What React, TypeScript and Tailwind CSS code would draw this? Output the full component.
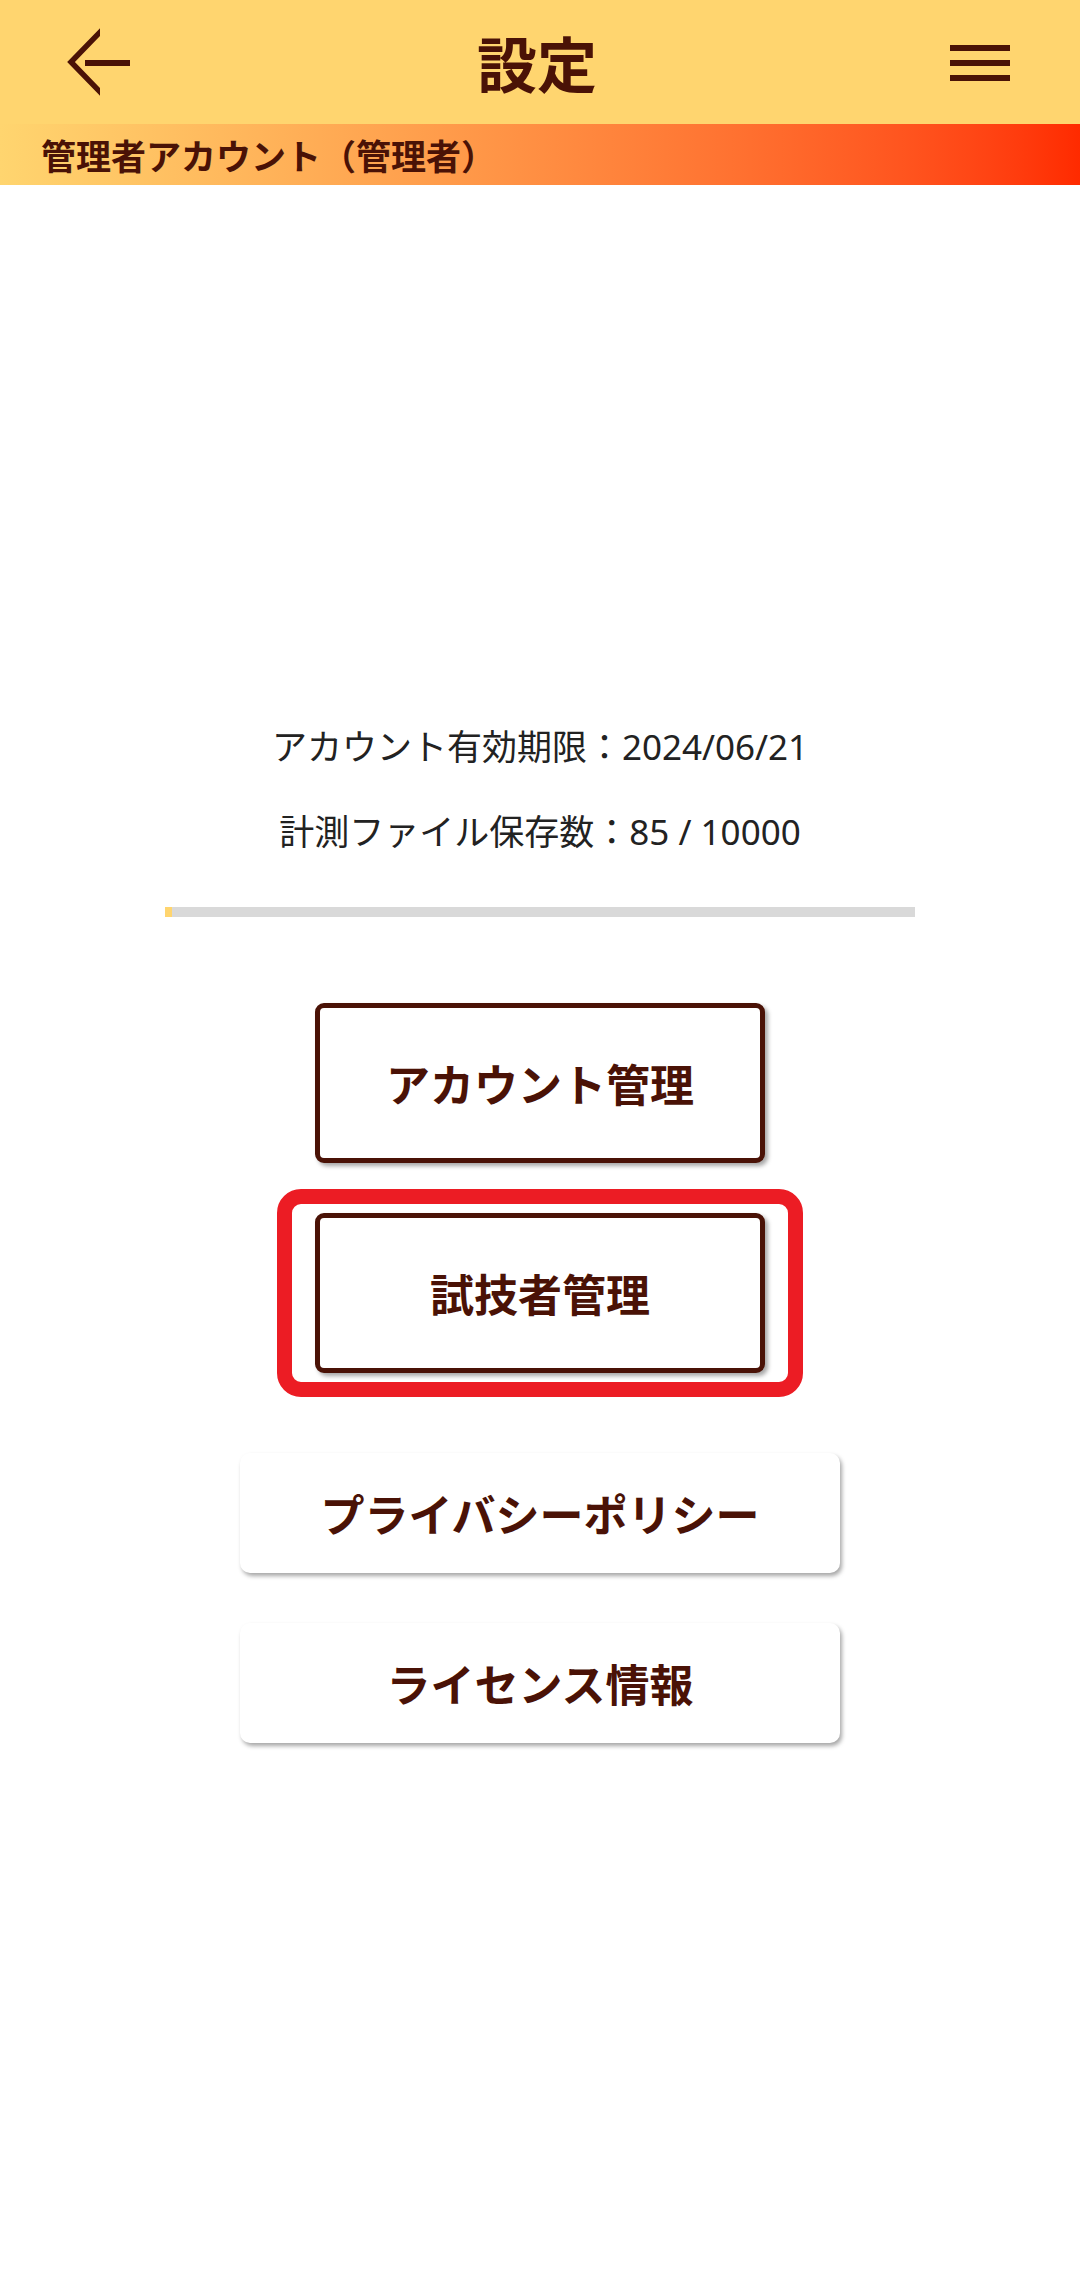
import React from "react";

const brown = "text-[#4A1206]";

function BackArrow() {
  return (
    <svg width="70" height="70" viewBox="0 0 70 70">
      <defs>
        <clipPath id="headClip">
          <rect x="0" y="0" width="36" height="70" />
        </clipPath>
      </defs>
      <polyline
        points="40,1 7,35 40,69"
        fill="none"
        stroke="#4A1206"
        strokeWidth="5.5"
        strokeLinejoin="miter"
        clipPath="url(#headClip)"
      />
      <rect x="21" y="33" width="45" height="6" fill="#4A1206" />
    </svg>
  );
}

function Hamburger() {
  return (
    <div className="flex flex-col gap-[9px] w-[60px]">
      <span className="block h-[6px] w-full bg-[#4A1206]" />
      <span className="block h-[6px] w-full bg-[#4A1206]" />
      <span className="block h-[6px] w-full bg-[#4A1206]" />
    </div>
  );
}

export default function App() {
  const used = 85;
  const total = 10000;

  return (
    <div className="w-[1080px] min-h-[2285px] bg-white font-['Noto_Sans','Noto_Sans_CJK_JP',sans-serif]">
      <header className="h-[124px] bg-[#FFD56F] grid grid-cols-[1fr_auto_1fr] items-center px-[64px] pr-[70px]">
        <div className="flex items-center">
          <BackArrow />
        </div>
        <h1 className={`text-[60px] leading-none font-bold ${brown} font-['Noto_Sans_CJK_JP',sans-serif]`}>
          設定
        </h1>
        <div className="flex justify-end pt-[2px]">
          <Hamburger />
        </div>
      </header>

      <div className="h-[61px] bg-linear-to-r from-[#FFD56F] to-[#FF2A00] flex items-center pl-[41px]">
        <span className={`text-[35px] leading-none font-bold ${brown} font-['Noto_Sans_CJK_JP',sans-serif]`}>
          管理者アカウント（管理者）
        </span>
      </div>

      <main className="flex flex-col items-center">
        <p className="mt-[538px] text-[35px] leading-[48px] text-[#222222]">
          アカウント有効期限：2024/06/21
        </p>
        <p className="mt-[37px] text-[35px] leading-[48px] text-[#222222]">
          計測ファイル保存数：{used} / {total}
        </p>

        <div className="mt-[51px] w-[750px] h-[10px] bg-[#D9D9D9]">
          <div
            className="h-full bg-[#FFD56F]"
            style={{ width: `${Math.max((used / total) * 100, 0.9)}%` }}
          />
        </div>

        <button
          className={`mt-[86px] w-[450px] h-[160px] bg-white border-[5px] border-[#4A1206] rounded-[9px] shadow-[3px_3px_4px_rgba(0,0,0,0.35)] text-[44px] font-bold ${brown} font-['Noto_Sans_CJK_JP',sans-serif]`}
        >
          アカウント管理
        </button>

        <div className="mt-[26px] w-[526px] border-[15px] border-[#EC1C24] rounded-[24px] px-[23px] py-[9px]">
          <button
            className={`w-[450px] h-[160px] bg-white border-[5px] border-[#4A1206] rounded-[9px] shadow-[3px_3px_4px_rgba(0,0,0,0.35)] text-[44px] font-bold ${brown} font-['Noto_Sans_CJK_JP',sans-serif]`}
          >
            試技者管理
          </button>
        </div>

        <button
          className={`mt-[56px] w-[600px] h-[120px] bg-white rounded-[10px] shadow-[2px_3px_4px_rgba(0,0,0,0.35)] text-[44px] font-bold ${brown} font-['Noto_Sans_CJK_JP',sans-serif]`}
        >
          プライバシーポリシー
        </button>

        <button
          className={`mt-[50px] w-[600px] h-[120px] bg-white rounded-[10px] shadow-[2px_3px_4px_rgba(0,0,0,0.35)] text-[44px] font-bold ${brown} font-['Noto_Sans_CJK_JP',sans-serif]`}
        >
          ライセンス情報
        </button>
      </main>
    </div>
  );
}
